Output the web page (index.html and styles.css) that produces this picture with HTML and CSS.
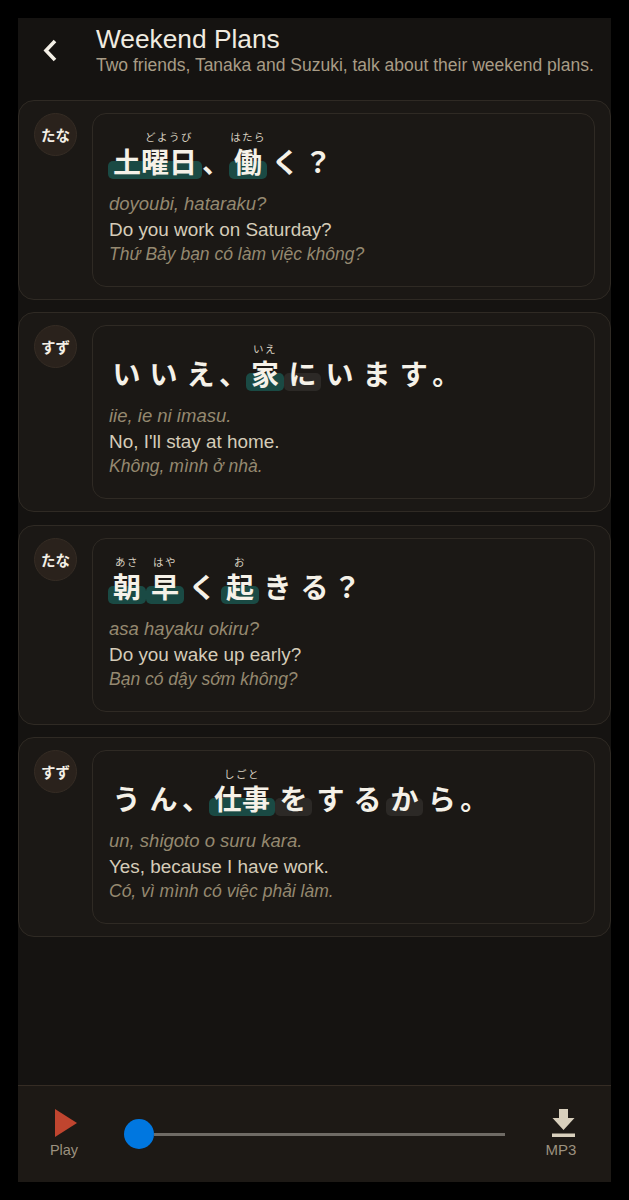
FILE: index.html
```html
<!DOCTYPE html>
<html lang="ja">
<head>
  <meta charset="UTF-8" />
  <meta name="viewport" content="width=device-width, initial-scale=1.0"/>
  <title>Weekend Plans</title>
  <link rel="stylesheet" href="styles.css">
</head>
<body>
  <div class="phone">
    <header class="header">
      <button class="back-btn">
        <svg width="14" height="23" viewBox="0 0 14 23"><path d="M12 2 L3 11.5 L12 21" fill="none" stroke="#f3efe6" stroke-width="3.6"/></svg>
      </button>
      <div>
        <h1>Weekend Plans</h1>
        <p class="subtitle">Two friends, Tanaka and Suzuki, talk about their weekend plans.</p>
      </div>
    </header>

    <div class="list">
      <div class="card">
        <div class="avatar">たな</div>
        <div class="bubble">
          <div class="jp">
            <span class="tok hi"><span class="rt rt-off">どようび</span><span class="base">土曜日</span></span>
            <span class="tok punct"><span class="base">、</span></span>
            <span class="tok hi"><span class="rt">はたら</span><span class="base">働</span></span>
            <span class="tok"><span class="base">く</span></span>
            <span class="tok punct"><span class="base">？</span></span>
          </div>
          <p class="romaji">doyoubi, hataraku?</p>
          <p class="en">Do you work on Saturday?</p>
          <p class="vi">Thứ Bảy bạn có làm việc không?</p>
        </div>
      </div>

      <div class="card">
        <div class="avatar">すず</div>
        <div class="bubble">
          <div class="jp">
            <span class="tok"><span class="base">い</span></span>
            <span class="tok"><span class="base">い</span></span>
            <span class="tok"><span class="base">え</span></span>
            <span class="tok punct"><span class="base">、</span></span>
            <span class="tok hi"><span class="rt">いえ</span><span class="base">家</span></span>
            <span class="tok part"><span class="base">に</span></span>
            <span class="tok"><span class="base">い</span></span>
            <span class="tok"><span class="base">ま</span></span>
            <span class="tok"><span class="base">す</span></span>
            <span class="tok punct"><span class="base">。</span></span>
          </div>
          <p class="romaji">iie, ie ni imasu.</p>
          <p class="en">No, I'll stay at home.</p>
          <p class="vi">Không, mình ở nhà.</p>
        </div>
      </div>

      <div class="card">
        <div class="avatar">たな</div>
        <div class="bubble">
          <div class="jp">
            <span class="tok hi"><span class="rt">あさ</span><span class="base">朝</span></span>
            <span class="tok hi"><span class="rt">はや</span><span class="base">早</span></span>
            <span class="tok"><span class="base">く</span></span>
            <span class="tok hi"><span class="rt">お</span><span class="base">起</span></span>
            <span class="tok"><span class="base">き</span></span>
            <span class="tok"><span class="base">る</span></span>
            <span class="tok punct"><span class="base">？</span></span>
          </div>
          <p class="romaji">asa hayaku okiru?</p>
          <p class="en">Do you wake up early?</p>
          <p class="vi">Bạn có dậy sớm không?</p>
        </div>
      </div>

      <div class="card">
        <div class="avatar">すず</div>
        <div class="bubble">
          <div class="jp">
            <span class="tok"><span class="base">う</span></span>
            <span class="tok"><span class="base">ん</span></span>
            <span class="tok punct"><span class="base">、</span></span>
            <span class="tok hi"><span class="rt">しごと</span><span class="base">仕事</span></span>
            <span class="tok part"><span class="base">を</span></span>
            <span class="tok"><span class="base">す</span></span>
            <span class="tok"><span class="base">る</span></span>
            <span class="tok part"><span class="base">か</span></span>
            <span class="tok"><span class="base">ら</span></span>
            <span class="tok punct"><span class="base">。</span></span>
          </div>
          <p class="romaji">un, shigoto o suru kara.</p>
          <p class="en">Yes, because I have work.</p>
          <p class="vi">Có, vì mình có việc phải làm.</p>
        </div>
      </div>
    </div>

    <footer class="player">
      <div class="ctrl ctrl-play">
        <svg width="22" height="28" viewBox="0 0 22 28"><path d="M0 0 L22 14 L0 28 Z" fill="#c0452f"/></svg>
        <span>Play</span>
      </div>
      <div class="slider">
        <div class="knob"></div>
        <div class="track"></div>
      </div>
      <div class="ctrl ctrl-mp3">
        <svg width="23" height="28" viewBox="0 0 23 28"><path d="M7 0 H16 V9 H22.5 L11.5 21 L0.5 9 H7 Z M0 24.5 H23 V28 H0 Z" fill="#d8cfbc"/></svg>
        <span>MP3</span>
      </div>
    </footer>
  </div>
</body>
</html>
```

FILE: styles.css
```css
* {
  box-sizing: border-box;
}

body {
  margin: 0;
  background: #000;
  font-family: 'Liberation Sans', Arial, sans-serif;
}

.phone {
  margin: 18px;
  height: 1164px;
  background: #151311;
  display: flex;
  flex-direction: column;
}

.header {
  display: flex;
  padding: 7px 0 24px 25px;
}

.back-btn {
  background: none;
  border: none;
  padding: 13px 0 0;
  width: 53px;
  height: 40px;
  text-align: left;
}

h1 {
  margin: 0;
  font-size: 26.3px;
  line-height: 28px;
  font-weight: normal;
  color: #f0ebe0;
}

.subtitle {
  margin: 1px 0 0;
  font-size: 17.5px;
  line-height: 22px;
  color: #a89c86;
  white-space: nowrap;
}

.list {
  display: flex;
  flex-direction: column;
  gap: 12.4px;
}

.card {
  display: flex;
  gap: 15px;
  padding: 12px 15px;
  background: #1b1815;
  border: 1px solid #2f2a24;
  border-radius: 16px;
}

.avatar {
  width: 43px;
  height: 43px;
  flex-shrink: 0;
  border-radius: 50%;
  background: #2a221c;
  border: 1px solid #352c24;
  color: #f3efe6;
  font-family: 'Noto Sans CJK JP', sans-serif;
  font-size: 14.5px;
  font-weight: bold;
  display: flex;
  align-items: center;
  justify-content: center;
}

.bubble {
  flex: 1;
  padding: 15px 16px 20px;
  background: #1b1815;
  border: 1px solid #2f2a24;
  border-radius: 14px;
}

.jp {
  display: flex;
  align-items: flex-end;
  margin: 0 0 13px -1px;
  font-family: 'Noto Sans CJK JP', sans-serif;
  color: #f5f1e8;
}

.tok {
  position: relative;
  display: flex;
  flex-direction: column;
  align-items: center;
  padding: 0 4.5px;
}

.tok.hi {
  padding: 0 5px;
}

.tok.punct {
  padding: 0;
  margin-right: -1px;
}

/* zero width so a long reading never widens its word */
.rt {
  width: 0;
  display: flex;
  justify-content: center;
  font-size: 10.5px;
  line-height: 15px;
  letter-spacing: 1.5px;
  color: #d8d0c0;
  white-space: nowrap;
}

/* furigana sits off centre over this word */
.rt-off {
  margin-left: 28px;
}

.base {
  position: relative;
  font-size: 28px;
  line-height: 34px;
  padding-bottom: 1px;
  font-weight: bold;
}

.tok.hi::before,
.tok.part::before {
  content: "";
  position: absolute;
  left: 0;
  right: 0;
  bottom: 0;
  height: 18px;
  border-radius: 5px;
}

.tok.hi::before {
  background: #1a4a44;
}

.tok.part::before {
  background: #2c2926;
}

p {
  margin: 0;
}

.romaji,
.en,
.vi {
  line-height: 24px;
}

.romaji {
  font-size: 18.5px;
  font-style: italic;
  color: #958970;
  margin-bottom: 2px;
}

.en {
  font-size: 18.9px;
  color: #d5ccb9;
}

.vi {
  font-size: 17.5px;
  font-style: italic;
  color: #958970;
}

.player {
  margin-top: auto;
  height: 97px;
  display: flex;
  align-items: flex-start;
  gap: 32px;
  padding: 23px 26px 0 22px;
  background: #1d1915;
  border-top: 1px solid #352c24;
}

.ctrl {
  width: 48px;
  display: flex;
  flex-direction: column;
  align-items: center;
  gap: 5px;
  line-height: 16px;
  color: #9c917f;
}

.ctrl svg {
  display: block;
}

.ctrl-play {
  font-size: 14.5px;
}

.ctrl-play svg {
  margin-left: 4px;
}

.ctrl-mp3 {
  font-size: 15px;
}

.ctrl-mp3 svg {
  margin-left: 4px;
}

.slider {
  flex: 1;
  display: flex;
  align-items: center;
  margin: 10px 0 0 4px;
}

.knob {
  width: 30px;
  height: 30px;
  border-radius: 50%;
  background: #0077e0;
  flex-shrink: 0;
}

.track {
  flex: 1;
  height: 3px;
  background: #6f6b65;
}
```
